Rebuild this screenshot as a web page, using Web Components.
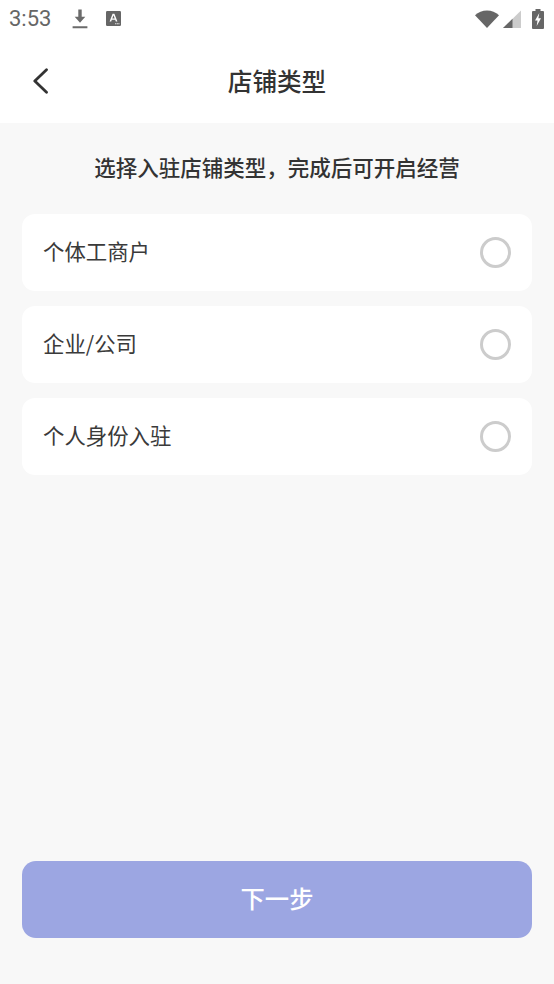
<!DOCTYPE html>
<html lang="zh-CN">
<head>
<meta charset="utf-8">
<title>店铺类型</title>
<style>
html,body{margin:0;padding:0;width:554px;height:984px;overflow:hidden;background:#f8f8f8;}
body{font-family:"Noto Sans CJK SC","Noto Sans",sans-serif;}
</style>
</head>
<body>
<store-type-page>
  <status-bar slot="status"></status-bar>
  <nav-header slot="header" title="店铺类型"></nav-header>
  <span slot="hint">选择入驻店铺类型&#xFF0C;完成后可开启经营</span>
  <option-card>个体工商户</option-card>
  <option-card>企业/公司</option-card>
  <option-card>个人身份入驻</option-card>
  <primary-button slot="action">下一步</primary-button>
</store-type-page>
<script>
function def(name, html){
  customElements.define(name, class extends HTMLElement{
    constructor(){super();this.attachShadow({mode:'open'}).innerHTML=html;}
    connectedCallback(){
      const t=this.shadowRoot.querySelector('[data-title]');
      if(t)t.textContent=this.getAttribute('title')||'';
    }
  });
}
def('store-type-page',`<style>
:host{display:flex;flex-direction:column;width:554px;height:984px;background:#f8f8f8;}
.hint{height:91px;box-sizing:border-box;padding-bottom:4px;display:flex;align-items:center;justify-content:center;font-size:21.5px;font-weight:500;color:#333;}
.list{display:flex;flex-direction:column;gap:15px;padding:0 22px;}
.spacer{flex:1;}
.action{padding:0 22px 46px;}
</style>
<slot name="status"></slot><slot name="header"></slot>
<div class="hint"><slot name="hint"></slot></div>
<div class="list"><slot></slot></div>
<div class="spacer"></div>
<div class="action"><slot name="action"></slot></div>`);

def('status-bar',`<style>
:host{display:flex;align-items:center;height:40px;background:#fff;color:#666;box-sizing:border-box;padding:0 10px 3px 9px;font-family:"Roboto",sans-serif;font-size:22px;}
.time{width:61px;}
svg{display:block;flex:none;}
.sp{flex:1;}
</style>
<span class="time">3:53</span>
<svg width="20" height="20" viewBox="0 0 20 20" style="margin-right:16px"><path d="M8.300 0.500h3.400v7.200h3.600L10 13.800 4.700 7.700h3.600z M2.600 17.200h14.800v2H2.600z" fill="#6b6b6b"/></svg>
<svg width="15" height="15" viewBox="0 0 15 15"><rect width="15" height="15" rx="1.200" fill="#666"/><path d="M3.600 10.500 6.600 2.800h1.800L11.400 10.500H9.800L9.200 8.800H5.800L5.200 10.500zM6.300 7.500h2.400L7.500 4.300z" fill="#fff"/><path d="M9.200 12.300h1v1h-1zM10.800 12.300h1v1h-1zM12.400 12.300h1v1h-1z" fill="#fff"/></svg>
<span class="sp"></span>
<svg width="24" height="18" viewBox="0 0 24 18" style="margin-right:4px"><path d="M0 5.200C3.300 2.300 7.400 0.600 12 0.600s8.700 1.700 12 4.600L12 18z" fill="#666"/></svg>
<svg width="18" height="18" viewBox="0 0 18 18" style="margin-right:11px"><path d="M0 18 18 .6V18z" fill="#ccc"/><path d="M0 18 9.500 8.800V18z" fill="#666"/></svg>
<svg width="12" height="20" viewBox="0 0 12 20"><path d="M3.500 0h5v2H11a1 1 0 0 1 1 1v16a1 1 0 0 1-1 1H1a1 1 0 0 1-1-1V3a1 1 0 0 1 1-1h2.500z" fill="#666"/><path d="M7.300 4 3 11.500h2.500L4.700 17 9 9.200H6.400z" fill="#fff"/></svg>`);

def('nav-header',`<style>
:host{display:grid;grid-template-columns:1fr auto 1fr;align-items:center;height:83px;background:#fff;box-sizing:border-box;padding-bottom:3px;}
.t{font-size:24.6px;font-weight:500;color:#333;line-height:1;}
.b{display:flex;padding-left:31px;}
svg{display:block;}
</style>
<div class="b"><svg width="18" height="26" viewBox="0 0 18 26" style="margin-top:2px"><path d="M15.500 1.800 3.800 13 15.500 24.200" fill="none" stroke="#333" stroke-width="2.800" stroke-linecap="round" stroke-linejoin="round"/></svg></div>
<div class="t" data-title></div><div></div>`);

def('option-card',`<style>
:host{display:flex;align-items:center;justify-content:space-between;height:77px;box-sizing:border-box;padding:0 21px;background:#fff;border-radius:13px;font-size:21.4px;color:#3a3a3a;}
.l{padding-bottom:4px;}
.r{width:31px;height:31px;box-sizing:border-box;border:3px solid #ccc;border-radius:50%;}
</style><span class="l"><slot></slot></span><span class="r"></span>`);

def('primary-button',`<style>
:host{display:flex;align-items:center;justify-content:center;height:77px;box-sizing:border-box;padding-bottom:4px;background:#9ca6e2;border-radius:14px;color:#fff;font-size:24.3px;font-weight:500;}
</style><slot></slot>`);
</script>
</body>
</html>
